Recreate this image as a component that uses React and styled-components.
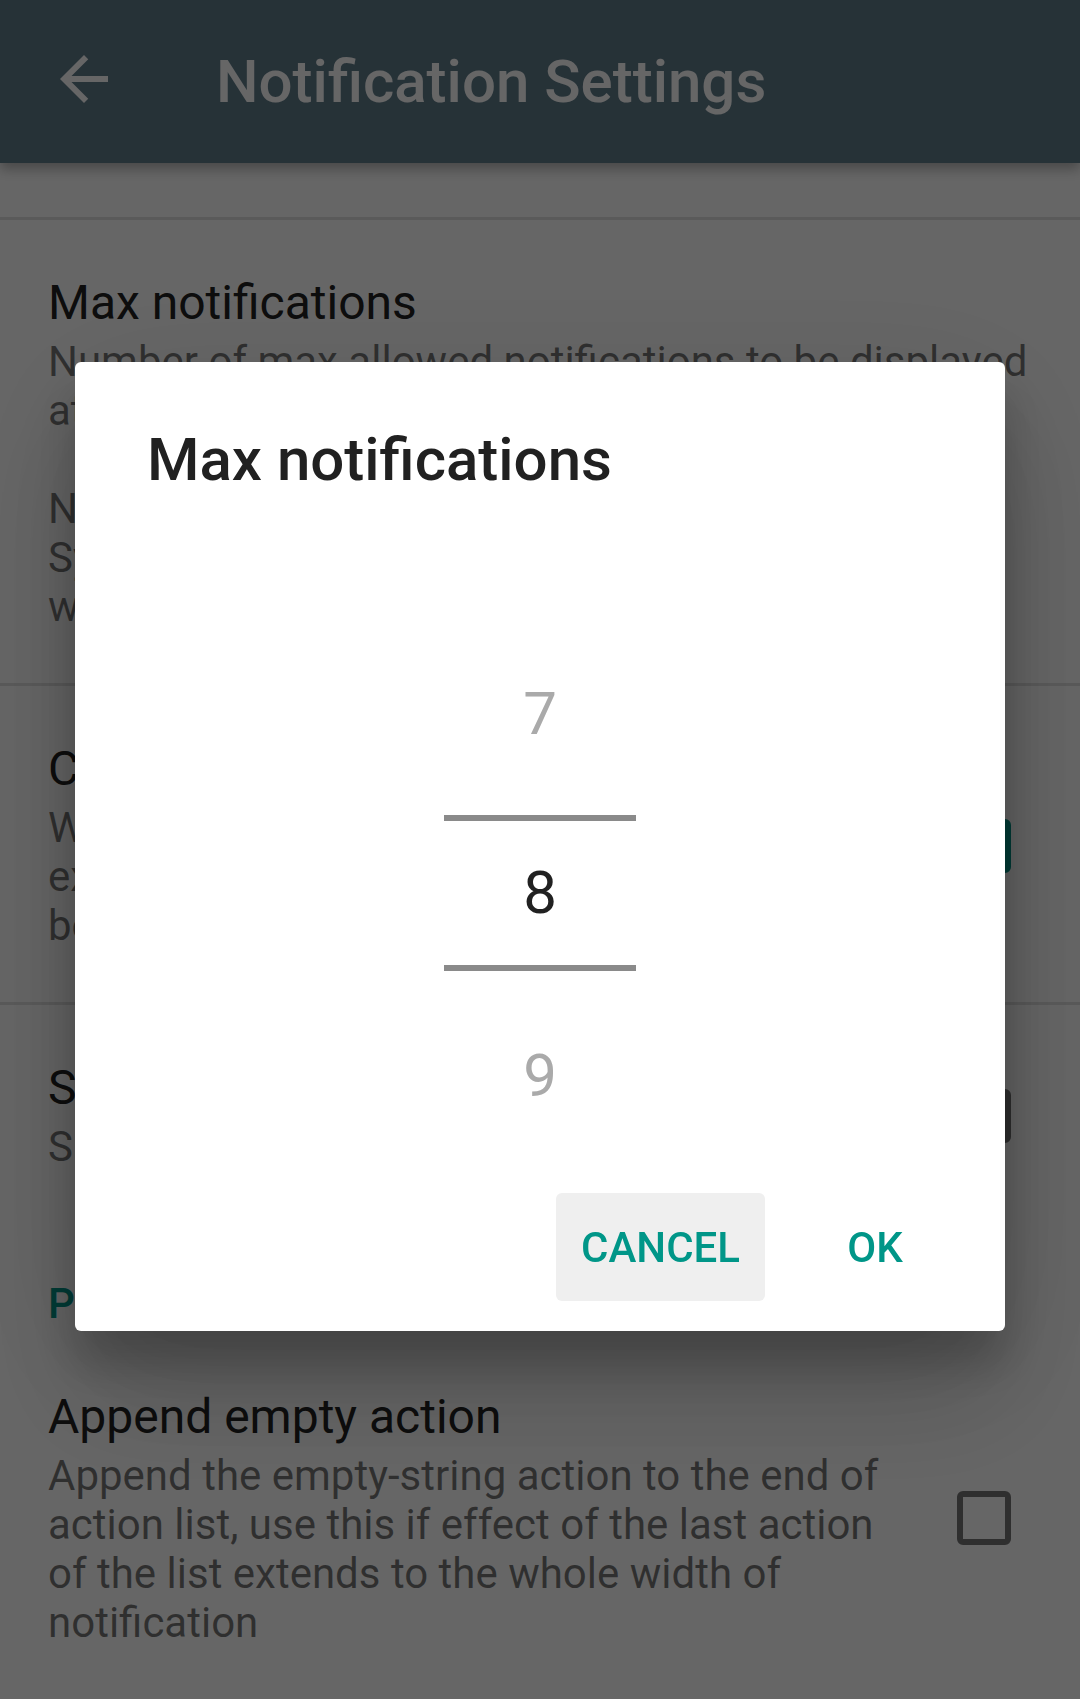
import React, { useState } from "react";
import styled, { createGlobalStyle } from "styled-components";

const GlobalStyle = createGlobalStyle`
  html, body {
    margin: 0;
    padding: 0;
    background: #ffffff;
  }
  body {
    font-family: Roboto, "Noto Sans", "Liberation Sans", sans-serif;
    -webkit-font-smoothing: antialiased;
  }
  * {
    box-sizing: border-box;
  }
`;

const TEAL = "#009688";

const Screen = styled.div`
  position: relative;
  min-height: 1699px;
  background: #ffffff;
  overflow: hidden;
`;

const AppBar = styled.header`
  height: 163px;
  background: #607d8b;
  display: flex;
  align-items: center;
  box-shadow: 0 6px 12px rgba(0, 0, 0, 0.3);
  position: relative;
  z-index: 1;
`;

const NavButton = styled.button`
  width: 168px;
  height: 163px;
  border: none;
  background: transparent;
  padding: 0;
  display: flex;
  align-items: center;
  justify-content: center;
  color: #ffffff;
  cursor: pointer;

  svg {
    margin-bottom: 5px;
  }
`;

const AppTitle = styled.h1`
  margin: 0 0 0 48px;
  font-size: 60px;
  line-height: 70px;
  font-weight: 500;
  color: #ffffff;
`;

const ScrolledGap = styled.div`
  height: 54px;
`;

const Divider = styled.div`
  height: 3px;
  background: #e1e1e1;
`;

const PrefItem = styled.div`
  display: flex;
  align-items: center;
  padding: 55px 48px 52px 48px;
`;

const PrefText = styled.div`
  flex: 1;
  min-width: 0;
`;

const PrefTitle = styled.div`
  font-size: 48px;
  line-height: 56px;
  color: #212121;
  white-space: nowrap;
`;

const PrefSummary = styled.div`
  margin-top: 6px;
  max-width: ${({ $maxWidth }) => ($maxWidth ? `${$maxWidth}px` : "none")};
  font-size: 42px;
  line-height: 49px;
  color: rgba(0, 0, 0, 0.54);
  white-space: ${({ $lines }) => ($lines ? "nowrap" : "normal")};
`;

const WidgetFrame = styled.div`
  flex: none;
  margin-left: 64px;
  margin-right: 21px;
  display: flex;
  align-items: center;
`;

const CheckBox = styled.div`
  width: 54px;
  height: 54px;
  border: 6px solid ${({ $checked }) => ($checked ? TEAL : "rgba(0, 0, 0, 0.54)")};
  border-radius: 6px;
  background: ${({ $checked }) => ($checked ? TEAL : "transparent")};
  display: flex;
  align-items: center;
  justify-content: center;
`;

const CategoryTitle = styled.div`
  padding: 56px 48px 6px 48px;
  font-size: 42px;
  line-height: 49px;
  font-weight: 500;
  color: ${TEAL};
`;

const Scrim = styled.div`
  position: fixed;
  inset: 0;
  background: rgba(0, 0, 0, 0.6);
  display: flex;
  align-items: center;
  justify-content: center;
  padding-bottom: 6px;
  z-index: 10;
`;

const Dialog = styled.div`
  width: 930px;
  background: #ffffff;
  border-radius: 6px;
  padding: 63px 0 30px 0;
  box-shadow: 0 33px 45px rgba(0, 0, 0, 0.2), 0 27px 138px rgba(0, 0, 0, 0.12),
    0 72px 114px rgba(0, 0, 0, 0.14);
`;

const DialogTitle = styled.h2`
  margin: 0;
  padding: 0 72px;
  font-size: 60px;
  line-height: 70px;
  font-weight: 500;
  color: #212121;
`;

const Picker = styled.div`
  margin-top: 118px;
  display: flex;
  flex-direction: column;
  align-items: center;
`;

const PickerCell = styled.div`
  width: 192px;
  height: 202px;
  display: flex;
  align-items: ${({ $below }) => ($below ? "flex-end" : "center")};
  padding-bottom: ${({ $below }) => ($below ? "62px" : "0")};
  justify-content: center;
  font-size: 60px;
  line-height: 70px;
  color: #aaaaaa;
`;

const PickerSelected = styled.div`
  width: 192px;
  height: 156px;
  border-top: 6px solid #8a8a8a;
  border-bottom: 6px solid #8a8a8a;
  display: flex;
  align-items: center;
  justify-content: center;
  font-size: 60px;
  line-height: 70px;
  color: #212121;
`;

const ButtonBar = styled.div`
  margin-top: 20px;
  padding-right: 34px;
  display: flex;
  justify-content: flex-end;
  gap: 14px;
`;

const DialogButton = styled.button`
  min-width: 192px;
  height: 108px;
  padding: 0 25px;
  border: none;
  border-radius: 6px;
  background: ${({ $focused }) => ($focused ? "#efefef" : "transparent")};
  color: ${TEAL};
  font-family: inherit;
  font-size: 42px;
  font-weight: 500;
  text-transform: uppercase;
  cursor: pointer;
`;

const BackArrow = () => (
  <svg width="72" height="72" viewBox="0 0 24 24" fill="currentColor">
    <path d="M20 11H7.83l5.59-5.59L12 4l-8 8 8 8 1.41-1.41L7.83 13H20v-2z" />
  </svg>
);

const Check = () => (
  <svg width="40" height="40" viewBox="0 0 24 24" fill="none" stroke="#fff" strokeWidth="3">
    <path d="M5 12.5l4.5 4.5L19 7.5" />
  </svg>
);

const prefs = [
  {
    title: "Max notifications",
    lines: [
      "Number of max allowed notifications to be displayed",
      "at the same time.",
      "",
      "Notifications above the limit are grouped in a panel",
      "System notifications are not counted and",
      "will always be shown.",
    ],
  },
  {
    title: "Compact actions",
    lines: [
      "When enabled, actions are shown only in",
      "expanded notifications, otherwise they",
      "become visible in collapsed state too",
    ],
    checkbox: true,
    checked: true,
  },
  {
    title: "Show timestamp",
    lines: ["Show when the notification was posted"],
    checkbox: true,
    checked: false,
  },
];

const Summary = ({ lines }) => (
  <PrefSummary $lines>
    {lines.map((line, i) => (
      <div key={i}>{line || "\u00a0"}</div>
    ))}
  </PrefSummary>
);

const App = () => {
  const [value] = useState(8);

  return (
    <Screen>
      <GlobalStyle />
      <AppBar>
        <NavButton aria-label="Back">
          <BackArrow />
        </NavButton>
        <AppTitle>Notification Settings</AppTitle>
      </AppBar>

      <ScrolledGap />
      <Divider />

      {prefs.map((p, i) => (
        <React.Fragment key={p.title}>
          <PrefItem>
            <PrefText>
              <PrefTitle>{p.title}</PrefTitle>
              <Summary lines={p.lines} />
            </PrefText>
            {p.checkbox && (
              <WidgetFrame>
                <CheckBox $checked={p.checked}>{p.checked && <Check />}</CheckBox>
              </WidgetFrame>
            )}
          </PrefItem>
          {i < prefs.length - 1 && <Divider />}
        </React.Fragment>
      ))}

      <CategoryTitle>Presentation</CategoryTitle>

      <PrefItem>
        <PrefText>
          <PrefTitle>Append empty action</PrefTitle>
          <PrefSummary $maxWidth={845}>
            Append the empty-string action to the end of action list, use this if
            effect of the last action of the list extends to the whole width of
            notification
          </PrefSummary>
        </PrefText>
        <WidgetFrame>
          <CheckBox />
        </WidgetFrame>
      </PrefItem>

      <Scrim>
        <Dialog>
          <DialogTitle>Max notifications</DialogTitle>
          <Picker>
            <PickerCell>{value - 1}</PickerCell>
            <PickerSelected>{value}</PickerSelected>
            <PickerCell $below>{value + 1}</PickerCell>
          </Picker>
          <ButtonBar>
            <DialogButton $focused>Cancel</DialogButton>
            <DialogButton>OK</DialogButton>
          </ButtonBar>
        </Dialog>
      </Scrim>
    </Screen>
  );
};

export default App;
